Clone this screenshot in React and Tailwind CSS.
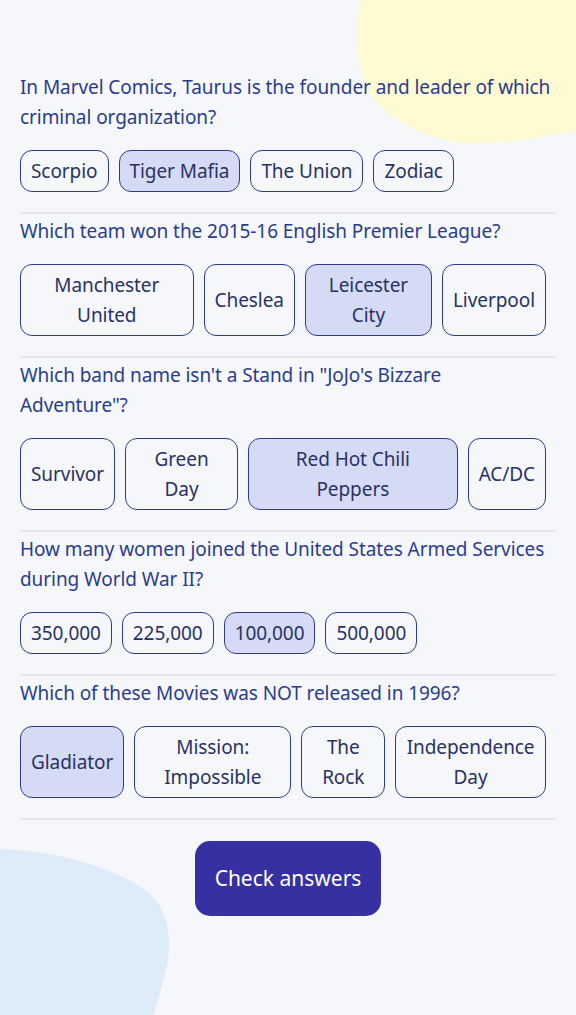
import React, { useState } from 'react';

const questions = [
    {
        q: 'In Marvel Comics, Taurus is the founder and leader of which criminal organization?',
        answers: ['Scorpio', 'Tiger Mafia', 'The Union', 'Zodiac'],
        picked: 1,
    },
    {
        q: 'Which team won the 2015-16 English Premier League?',
        answers: ['Manchester United', 'Cheslea', 'Leicester City', 'Liverpool'],
        picked: 2,
    },
    {
        q: 'Which band name isn\'t a Stand in "JoJo\'s Bizzare Adventure"?',
        answers: ['Survivor', 'Green Day', 'Red Hot Chili Peppers', 'AC/DC'],
        picked: 2,
    },
    {
        q: 'How many women joined the United States Armed Services during World War II?',
        answers: ['350,000', '225,000', '100,000', '500,000'],
        picked: 2,
    },
    {
        q: 'Which of these Movies was NOT released in 1996?',
        answers: ['Gladiator', 'Mission: Impossible', 'The Rock', 'Independence Day'],
        picked: 0,
    },
];

const App = () => {
    const [picks, setPicks] = useState(questions.map(q => q.picked));

    const pick = (qi, ai) => {
        setPicks(prev => prev.map((p, i) => (i === qi ? ai : p)));
    };

    return (
        <div
            className="relative min-h-screen overflow-hidden bg-[#F5F7FB]"
            style={{ fontFamily: '"Noto Sans", "Open Sans", sans-serif' }}
        >
            {/* decorative blobs */}
            <svg className="absolute top-0 right-0" width="221" height="145" viewBox="0 0 221 145">
                <path d="M5 0 C0 40 0 80 25 105 C55 135 95 145 130 143 C170 141 200 135 221 130 L221 0 Z" fill="#FFFAD1" />
            </svg>
            <svg className="absolute bottom-0 left-0" width="172" height="167" viewBox="0 0 172 167">
                <path d="M0 0 C60 2 120 20 150 45 C172 65 172 100 165 125 C161 140 157 155 153 167 L0 167 Z" fill="#DEEBF8" />
            </svg>

            <div className="relative px-5 pt-[72px] pb-[100px]">
                {questions.map((item, qi) => (
                    <div key={qi} className={`border-b-2 border-[#E4E7EE] pb-5 ${qi > 0 ? 'pt-[2px]' : ''}`}>
                        <h2 className="pr-[4px] text-[19px] leading-[30px] tracking-[-0.07px] text-[#2B3C8E]">{item.q}</h2>
                        <div className="mt-[18px] flex">
                            {item.answers.map((a, ai) => (
                                <button
                                    key={ai}
                                    onClick={() => pick(qi, ai)}
                                    className={`mr-[10px] rounded-[12px] border border-[#2E3B8C] px-[10px] py-[5px] text-center text-[19px] leading-[30px] tracking-[-0.07px] text-[#293264] ${picks[qi] === ai ? 'bg-[#D6DBF5]' : 'bg-transparent'}`}
                                >
                                    {a}
                                </button>
                            ))}
                        </div>
                    </div>
                ))}

                <div className="mt-[21px] flex justify-center">
                    <button className="h-[75px] rounded-[15px] bg-[#3730A3] px-5 text-[21px] text-white">
                        Check answers
                    </button>
                </div>
            </div>
        </div>
    );
};

export default App;
